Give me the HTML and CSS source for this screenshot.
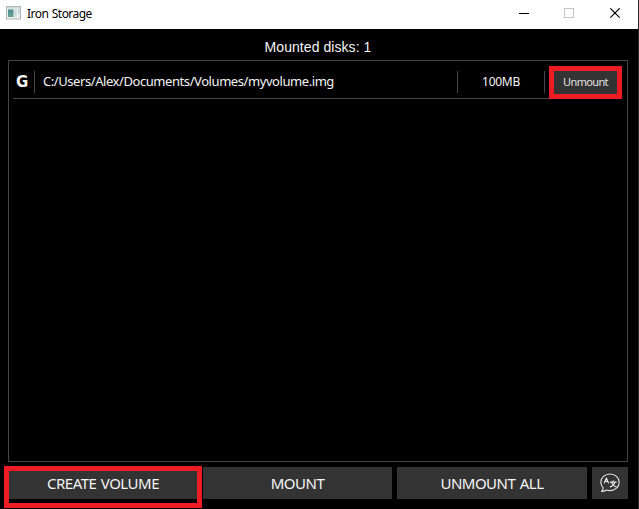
FILE: index.html
```html
<!DOCTYPE html>
<html lang="en">
<head>
<meta charset="utf-8">
<title>Iron Storage</title>
<link rel="stylesheet" href="styles.css">
</head>
<body>
<div class="window">
  <header class="titlebar">
    <svg class="app-icon" width="15" height="14" viewBox="0 0 15 14">
      <defs><linearGradient id="g" x1="0" y1="0" x2="0" y2="1"><stop offset="0" stop-color="#4b8894"/><stop offset="1" stop-color="#6ba68d"/></linearGradient></defs>
      <rect x=".5" y=".5" width="14" height="12.5" fill="#e9eeee" stroke="#b0b9b9"/>
      <rect x="1" y="1" width="13" height="1.5" fill="#d0d7d7"/>
      <rect x="2" y="3.500" width="5.500" height="7.500" fill="url(#g)"/>
      <rect x="8.500" y="3.500" width="2" height="7.500" fill="#cbd9d8"/>
      <rect x="12" y="3.500" width="1.500" height="4" fill="#bccaca"/>
    </svg>
    <h1 class="title">Iron Storage</h1>
    <svg class="controls" width="103" height="11" viewBox="0 0 103 11" fill="none">
      <path d="M0 5.500h10" stroke="#000"/>
      <rect x="45.500" y=".5" width="9" height="9" stroke="#c4c4c4"/>
      <path d="M91.300 .3l9.400 9.400M100.700 .3l-9.400 9.400" stroke="#000" stroke-width="1.100"/>
    </svg>
  </header>
  <main class="content">
    <p class="status">Mounted disks: 1</p>
    <section class="list">
      <div class="row">
        <span class="drive">G</span>
        <span class="path"><span class="path-text">C:/Users/Alex/Documents/Volumes/myvolume.img</span></span>
        <span class="size">100MB</span>
        <div class="action"><button class="unmount">Unmount</button></div>
      </div>
    </section>
    <footer class="bar">
      <div class="slot"><button class="btn">CREATE VOLUME</button><span class="mark"></span></div>
      <button class="btn mount">MOUNT</button>
      <button class="btn all">UNMOUNT ALL</button>
      <button class="btn lang" aria-label="Language">
        <svg width="20" height="20" viewBox="0 0 20 20" fill="none" stroke="#e8e8e8" stroke-width="1.100" stroke-linecap="round" stroke-linejoin="round">
          <path d="M3.200 14.800C1.600 13.300.8 11.400.8 9.300.8 4.700 4.900 1 10 1s9.200 3.700 9.200 8.300-4.100 8.300-9.200 8.300c-1.200 0-2.300-.2-3.300-.6-1.500 1-3.300 1.500-5.200 1.500 1-.9 1.700-2.200 1.700-3.700z"/>
          <path d="M4.300 10l2.100-5 2.100 5M5.100 8.400h2.600"/>
          <path d="M10.200 9.100h6M13.200 7.800v1.300M11.600 9.300c.6 2 2.300 3.700 4.600 4.600M14.900 9.300c-.6 2.100-2.400 3.900-4.700 4.600"/>
        </svg>
      </button>
    </footer>
  </main>
</div>
</body>
</html>
```
FILE: styles.css
```css
* { box-sizing: border-box; }
body { margin: 0; background: #000; color: #f4f4f4; font-family: "Noto Sans", "Open Sans", sans-serif; overflow: hidden; }
button { font: inherit; color: inherit; border: 0; padding: 0; margin: 0; background: #333; white-space: nowrap; }
.window { width: 639px; height: 509px; display: flex; flex-direction: column; border-right: 1px solid #262626; }
.titlebar { height: 29px; background: #fff; color: #000; display: flex; align-items: center; padding: 0 16px 0 6px; }
.app-icon { margin-top: -3px; }
.title { margin: -2px auto 0 6px; font-size: 12px; font-weight: 400; line-height: 16px; letter-spacing: -.55px; word-spacing: 1px; }
.controls { margin-top: -2px; }
.content { flex: 1; display: flex; flex-direction: column; padding: 0 10px 10px 8px; }
.status { margin: 0; height: 31px; padding: 10px 0 0; text-align: center; font: 14px/17px "Liberation Sans", Arial, sans-serif; letter-spacing: .06px; }
.list { height: 402px; border: 1px solid #454545; padding: 5px 5px 0 4px; }
.row { display: flex; height: 33px; border-bottom: 1px solid #454545; align-items: center; }
.drive { width: 22px; height: 22px; padding-left: 3px; font-family: "DejaVu Sans", sans-serif; font-size: 15px; line-height: 23px; font-weight: 700; border-right: 1px solid #454545; }
.path { width: 423px; height: 22px; padding-left: 8px; font-size: 13px; line-height: 21px; border-right: 1px solid #454545; white-space: nowrap; }
.path-text { letter-spacing: -.43px; }
.size { width: 87px; height: 22px; text-align: center; font-size: 12px; line-height: 22px; letter-spacing: -.3px; border-right: 1px solid #454545; }
.action { position: relative; width: 73px; height: 33px; margin-left: 4px; border: 5px solid #ed1c24; display: flex; flex: none; }
.unmount { flex: 1; font-size: 11px; line-height: 22px; letter-spacing: -.65px; color: #e0e0e0; }
.bar { margin-top: 5px; height: 32px; display: grid; grid-template-columns: 190px 189px 190px 36px; gap: 5px; }
.btn { height: 32px; font-size: 15px; line-height: 32px; letter-spacing: -.5px; word-spacing: 1px; display: block; }
.slot { position: relative; display: grid; }
.mark { position: absolute; left: -4px; top: -1px; width: 198px; height: 42px; border: 5px solid #ed1c24; }
.lang { display: flex; align-items: center; justify-content: center; }
```
